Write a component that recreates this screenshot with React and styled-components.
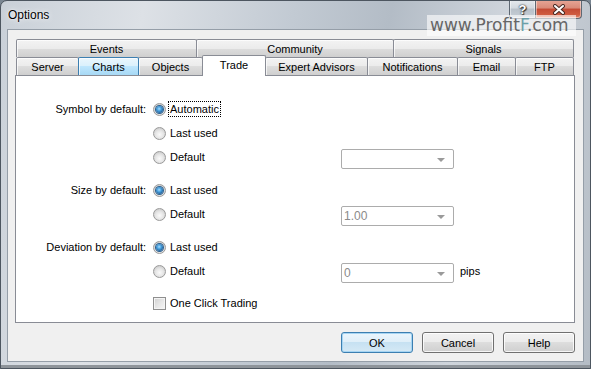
import React from 'react';
import styled, { createGlobalStyle } from 'styled-components';

const Global = createGlobalStyle`
  html, body {
    margin: 0;
    padding: 0;
    background: #7a8692;
  }
  body {
    font-family: "Liberation Sans", Arial, sans-serif;
    font-size: 11px;
    color: #000;
  }
`;

const Frame = styled.div`
  position: relative;
  width: 591px;
  height: 369px;
  box-sizing: border-box;
  display: flex;
  flex-direction: column;
  border: 1px solid #4d5660;
  border-radius: 7px 7px 0 0;
  background: linear-gradient(100deg, #c9d0d8 0%, #dde1e6 22%, #c2cad3 45%, #b3bcc6 60%, #cfd5dc 78%, #b4bcc5 100%);
  box-shadow: inset 0 -3px 0 #8e949a;
  overflow: hidden;
`;

const TitleBar = styled.div`
  height: 28px;
  flex: 0 0 28px;
  display: flex;
  justify-content: space-between;
  align-items: flex-start;
  padding: 0 8px 0 7px;
`;

const Title = styled.div`
  font-family: "Liberation Sans", Arial, sans-serif;
  font-size: 12px;
  line-height: 28px;
  color: #000;
  text-shadow: 0 0 6px rgba(255, 255, 255, 0.95), 0 0 2px rgba(255, 255, 255, 0.9);
`;

const Caption = styled.div`
  display: flex;
  margin-top: -1px;
`;

const CaptionButton = styled.div`
  width: ${p => p.$w}px;
  height: 19px;
  box-sizing: border-box;
  display: flex;
  align-items: center;
  justify-content: center;
  border: 1px solid #5e6873;
  border-top: 0;
  border-left: ${p => (p.$first ? '1px solid #5e6873' : '0')};
  border-radius: ${p => (p.$first ? '0 0 0 4px' : '0 0 4px 0')};
  box-shadow: inset 0 0 0 1px rgba(255, 255, 255, 0.45);
  background: ${p =>
    p.$close
      ? 'linear-gradient(#e7a697 0%, #d98a78 45%, #c44a34 50%, #cf5a3f 80%, #e2866a 100%)'
      : 'linear-gradient(rgba(240,243,246,0.7) 0%, rgba(214,220,226,0.6) 45%, rgba(170,180,190,0.6) 50%, rgba(196,204,212,0.6) 100%)'};
  font-family: "Liberation Sans", Arial, sans-serif;
  font-weight: bold;
  font-size: 13px;
  color: #fff;
  text-shadow: 0 0 1px #333, 0 0 2px #333, 1px 1px 1px #333;
`;

const Watermark = styled.div`
  position: absolute;
  left: 426px;
  top: 14px;
  width: 149px;
  height: 21px;
  background: rgba(255, 255, 255, 0.6);
  font-family: "DejaVu Sans", Verdana, sans-serif;
  font-size: 17px;
  line-height: 21px;
  color: #666;
  white-space: nowrap;
  padding-left: 3px;
  box-sizing: border-box;
`;

const BrandF = styled.span`
  color: #6c9fa8;
`;

const Body = styled.div`
  flex: 1;
  display: flex;
  padding: 0 6px 6px 6px;
`;

const Client = styled.div`
  flex: 1;
  display: flex;
  flex-direction: column;
  background: #f0f0f0;
  border: 1px solid #959ea8;
  padding: 9px 8px 8px 7px;
`;

const Tabs = styled.div`
  display: flex;
  flex-direction: column;
  margin: 0 1px;
`;

const TabRow = styled.div`
  display: flex;
  height: 18px;
  align-items: flex-start;
`;

const Tab = styled.div`
  flex: ${p => (p.$w ? `0 0 ${p.$w}px` : '1')};
  box-sizing: border-box;
  height: ${p => (p.$active ? 21 : 18)}px;
  margin-top: ${p => (p.$active ? -2 : 0)}px;
  margin-left: ${p => (p.$first ? 0 : -1)}px;
  position: relative;
  z-index: ${p => (p.$active ? 2 : p.$hover ? 1 : 0)};
  display: flex;
  align-items: center;
  justify-content: center;
  padding-bottom: ${p => (p.$active ? 3 : 0)}px;
  border: 1px solid ${p => (p.$hover ? '#3c7fb1' : '#898c95')};
  border-bottom: 0;
  border-radius: 2px 2px 0 0;
  background: ${p =>
    p.$active
      ? '#fff'
      : p.$hover
      ? 'linear-gradient(#eaf6fd 0%, #d9f0fc 50%, #bee6fd 50%, #a7d9f5 100%)'
      : 'linear-gradient(#f3f3f3 0%, #ebebeb 50%, #dddddd 50%, #cfcfcf 100%)'};
  box-shadow: ${p => (p.$active ? 'none' : 'inset 1px 1px 0 rgba(255,255,255,0.7)')};
  white-space: nowrap;
`;

const Panel = styled.div`
  height: 248px;
  box-sizing: border-box;
  background: #fff;
  border: 1px solid #898c95;
  padding-top: 21px;
  display: flex;
  flex-direction: column;
`;

const Group = styled.div`
  display: flex;
  flex-direction: column;
  margin-top: ${p => p.$gap || 0}px;
`;

const Field = styled.div`
  display: grid;
  grid-template-columns: 137px 188px 119px auto;
  height: 24px;
  align-items: center;
`;

const Label = styled.div`
  text-align: right;
  padding-right: 7px;
  white-space: nowrap;
`;

const Choice = styled.label`
  display: flex;
  align-items: center;
  gap: 3px;
  white-space: nowrap;
`;

const Radio = styled.span`
  width: 13px;
  height: 13px;
  box-sizing: border-box;
  border-radius: 50%;
  border: 1px solid #9a9a9a;
  background: radial-gradient(circle at 50% 60%, #fafafa 0%, #e6e6e6 45%, #d0d0d0 75%, #f0f0f0 100%);
  position: relative;
  flex: 0 0 13px;

  &::after {
    content: '';
    display: ${p => (p.$on ? 'block' : 'none')};
    position: absolute;
    left: 2px;
    top: 2px;
    width: 7px;
    height: 7px;
    border-radius: 50%;
    background: radial-gradient(circle at 45% 40%, #a8dcff 0%, #4aa3e0 35%, #17548e 80%, #1b4a78 100%);
    box-shadow: 0 0 0 1px #2b5f8e;
  }
`;

const Check = styled.span`
  width: 13px;
  height: 13px;
  box-sizing: border-box;
  flex: 0 0 13px;
  border: 1px solid #8f8f8f;
  background: linear-gradient(135deg, #d0d0d0 0%, #e6e6e6 50%, #f6f6f6 100%);
  box-shadow: inset 0 0 0 1px #f4f4f4;
`;

const Text = styled.span`
  padding: 1px 1px;
  margin-left: -1px;
  border: 1px dotted ${p => (p.$focus ? '#000' : 'transparent')};
`;

const Combo = styled.div`
  align-self: end;
  width: 113px;
  height: 20px;
  box-sizing: border-box;
  border: 1px solid #acacac;
  border-radius: 2px;
  background: #fff;
  display: flex;
  align-items: center;
  justify-content: space-between;
  padding: 0 8px 0 2px;
  color: #8a8a8a;
  font-size: 12px;
`;

const Arrow = styled.span`
  width: 0;
  height: 0;
  border-left: 4px solid transparent;
  border-right: 4px solid transparent;
  border-top: 4px solid #9a9a9a;
  margin-top: 1px;
`;

const Unit = styled.span`
  padding-bottom: 0;
`;

const Buttons = styled.div`
  display: flex;
  justify-content: flex-end;
  gap: 9px;
  margin-top: 9px;
`;

const Button = styled.div`
  width: 72px;
  height: 21px;
  box-sizing: border-box;
  display: flex;
  align-items: center;
  justify-content: center;
  border: 1px solid ${p => (p.$default ? '#3c7fb1' : '#707070')};
  border-radius: 3px;
  background: ${p =>
    p.$default
      ? 'linear-gradient(#eaf6fd 0%, #dfeef8 50%, #c6e1f2 50%, #d5e9f5 100%)'
      : 'linear-gradient(#f2f2f2 0%, #ebebeb 50%, #dddddd 50%, #cfcfcf 100%)'};
  box-shadow: inset 0 0 0 1px ${p => (p.$default ? '#a6d5f3' : 'rgba(255,255,255,0.8)')};
`;

const rowTwo = [
  { name: 'Server', w: 63 },
  { name: 'Charts', w: 61, hover: true },
  { name: 'Objects', w: 65 },
  { name: 'Trade', w: 64, active: true },
  { name: 'Expert Advisors', w: 103 },
  { name: 'Notifications', w: 91 },
  { name: 'Email', w: 59 },
  { name: 'FTP' },
];

const CloseIcon = () => (
  <svg width="14" height="11" viewBox="0 0 14 11">
    <path d="M3 2 L11 9 M11 2 L3 9" stroke="#4a2a24" strokeWidth="4" strokeLinecap="round" />
    <path d="M3 2 L11 9 M11 2 L3 9" stroke="#fff" strokeWidth="2" strokeLinecap="round" />
  </svg>
);

const Option = ({ on, focus, children }) => (
  <Choice>
    <Radio $on={on} />
    <Text $focus={focus}>{children}</Text>
  </Choice>
);

export default function App() {
  return (
    <>
      <Global />
      <Frame>
        <TitleBar>
          <Title>Options</Title>
          <Caption>
            <CaptionButton $w={27} $first>?</CaptionButton>
            <CaptionButton $w={46} $close>
              <CloseIcon />
            </CaptionButton>
          </Caption>
        </TitleBar>
        <Watermark>
          www.Profit<BrandF>F</BrandF>.com
        </Watermark>
        <Body>
          <Client>
            <Tabs>
              <TabRow>
                <Tab $first $w={181}>Events</Tab>
                <Tab $w={198}>Community</Tab>
                <Tab>Signals</Tab>
              </TabRow>
              <TabRow>
                {rowTwo.map((t, i) => (
                  <Tab key={t.name} $first={i === 0} $w={t.w} $active={t.active} $hover={t.hover}>
                    {t.name}
                  </Tab>
                ))}
              </TabRow>
            </Tabs>
            <Panel>
              <Group>
                <Field>
                  <Label>Symbol by default:</Label>
                  <Option on focus>Automatic</Option>
                </Field>
                <Field>
                  <span />
                  <Option>Last used</Option>
                </Field>
                <Field>
                  <span />
                  <Option>Default</Option>
                  <Combo>
                    <span />
                    <Arrow />
                  </Combo>
                </Field>
              </Group>
              <Group $gap={9}>
                <Field>
                  <Label>Size by default:</Label>
                  <Option on>Last used</Option>
                </Field>
                <Field>
                  <span />
                  <Option>Default</Option>
                  <Combo>
                    <span>1.00</span>
                    <Arrow />
                  </Combo>
                </Field>
              </Group>
              <Group $gap={9}>
                <Field>
                  <Label>Deviation by default:</Label>
                  <Option on>Last used</Option>
                </Field>
                <Field>
                  <span />
                  <Option>Default</Option>
                  <Combo>
                    <span>0</span>
                    <Arrow />
                  </Combo>
                  <Unit>pips</Unit>
                </Field>
              </Group>
              <Group $gap={8}>
                <Field>
                  <span />
                  <Choice>
                    <Check />
                    <Text>One Click Trading</Text>
                  </Choice>
                </Field>
              </Group>
            </Panel>
            <Buttons>
              <Button $default>OK</Button>
              <Button>Cancel</Button>
              <Button>Help</Button>
            </Buttons>
          </Client>
        </Body>
      </Frame>
    </>
  );
}
